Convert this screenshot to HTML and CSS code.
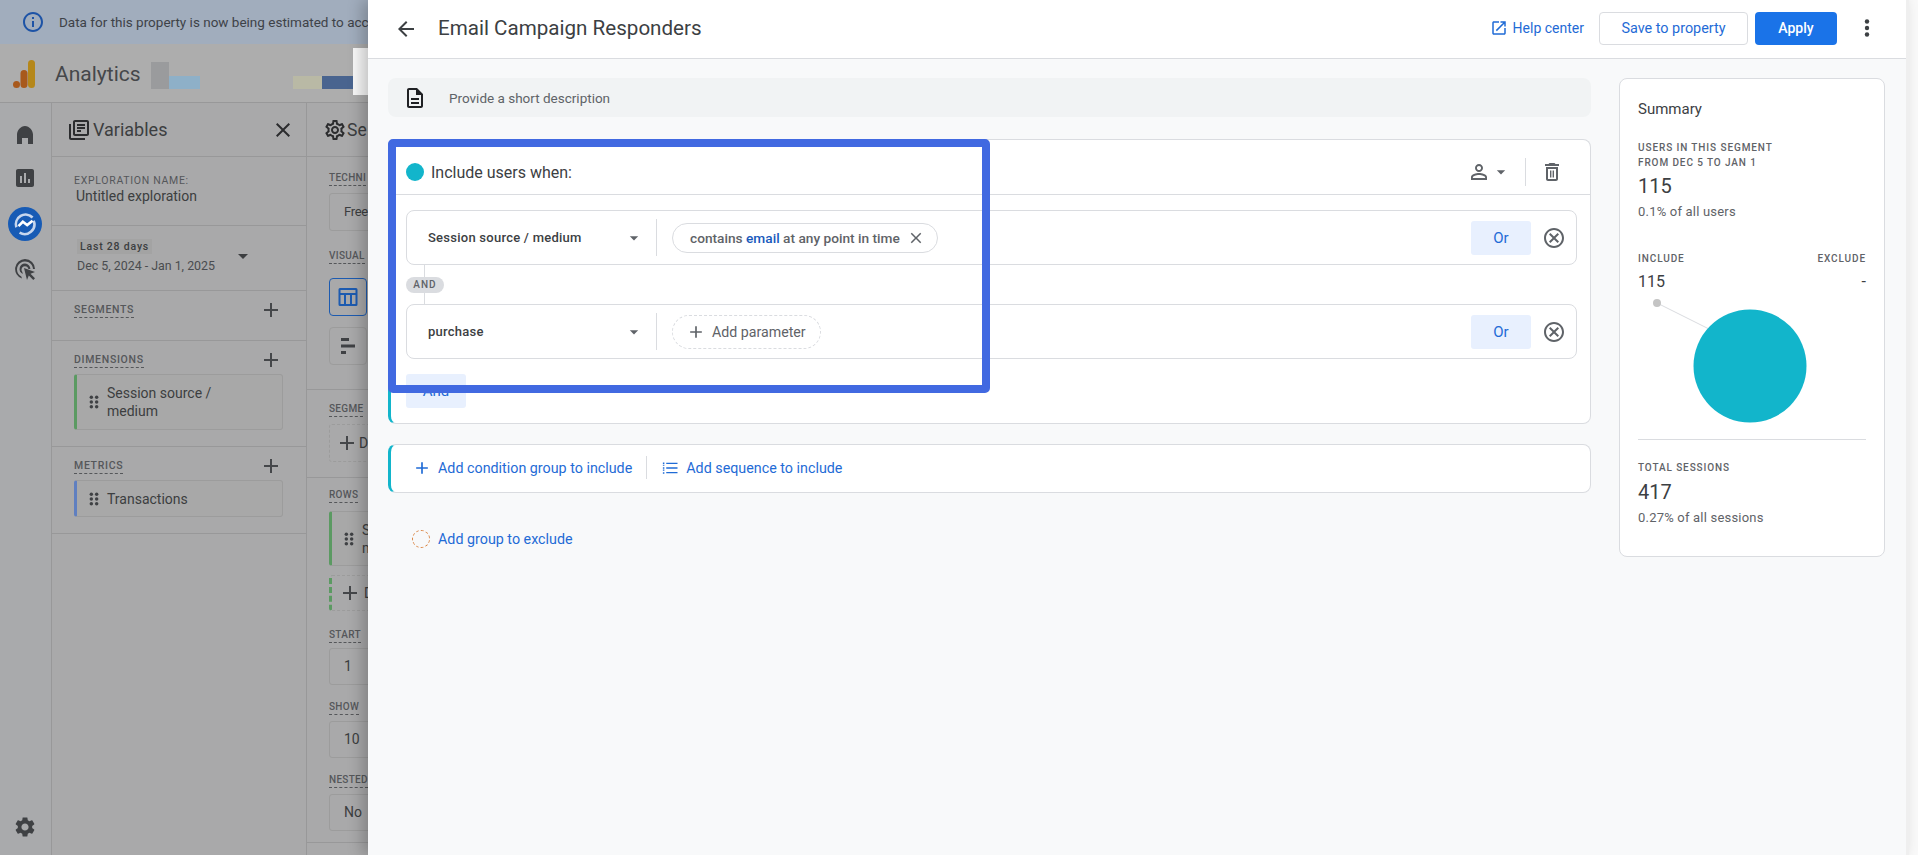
FILE: index.html
```html
<!DOCTYPE html>
<html lang="en">
<head>
<meta charset="utf-8">
<title>Email Campaign Responders</title>
<link rel="stylesheet" href="styles.css">
</head>
<body>
<svg class="sprite" aria-hidden="true">
  <symbol id="i-info" viewBox="0 0 24 24"><path d="M11 7h2v2h-2zm0 4h2v6h-2zm1-9C6.48 2 2 6.48 2 12s4.48 10 10 10 10-4.48 10-10S17.52 2 12 2zm0 18c-4.41 0-8-3.59-8-8s3.59-8 8-8 8 3.59 8 8-3.59 8-8 8z"/></symbol>
  <symbol id="i-home" viewBox="0 0 24 24"><path d="M4 21v-9.5C4 7.5 7.6 3 12 3s8 4.5 8 8.5V21h-5v-6H9v6z"/></symbol>
  <symbol id="i-bars" viewBox="0 0 24 24"><path d="M19 3H5c-1.1 0-2 .9-2 2v14c0 1.1.9 2 2 2h14c1.1 0 2-.9 2-2V5c0-1.1-.9-2-2-2zM9 17H7v-7h2v7zm4 0h-2V7h2v10zm4 0h-2v-4h2v4z"/></symbol>
  <symbol id="i-ads" viewBox="0 0 24 24"><path d="M12 2a10 10 0 0 0-3 19.5l-.7-2A8 8 0 1 1 20 12h2A10 10 0 0 0 12 2z"/><path d="M12 6.5a5.5 5.5 0 0 0-2.2 10.5l-.5-2a3.5 3.5 0 1 1 6.1-3h2A5.5 5.5 0 0 0 12 6.5z"/><path d="M11 11l11 4-4.5 1.8L22 21.3 20.3 23l-4.5-4.5L14 23z"/></symbol>
  <symbol id="i-library" viewBox="0 0 24 24"><path d="M4 6H2v14c0 1.1.9 2 2 2h14v-2H4V6zm16-4H8c-1.1 0-2 .9-2 2v12c0 1.1.9 2 2 2h12c1.1 0 2-.9 2-2V4c0-1.1-.9-2-2-2zm0 14H8V4h12v12zM10 9h8v2h-8zm0 3h4v2h-4zm0-6h8v2h-8z"/></symbol>
  <symbol id="i-gear" viewBox="0 0 24 24"><path d="M19.43 12.98c.04-.32.07-.64.07-.98 0-.34-.03-.66-.07-.98l2.11-1.65c.19-.15.24-.42.12-.64l-2-3.46c-.09-.16-.26-.25-.44-.25-.06 0-.12.01-.17.03l-2.49 1c-.52-.4-1.08-.73-1.69-.98l-.38-2.65C14.46 2.18 14.25 2 14 2h-4c-.25 0-.46.18-.49.42l-.38 2.65c-.61.25-1.17.59-1.69.98l-2.49-1c-.06-.02-.12-.03-.18-.03-.17 0-.34.09-.43.25l-2 3.46c-.13.22-.07.49.12.64l2.11 1.65c-.04.32-.07.65-.07.98 0 .33.03.66.07.98l-2.11 1.65c-.19.15-.24.42-.12.64l2 3.46c.09.16.26.25.44.25.06 0 .12-.01.17-.03l2.49-1c.52.4 1.08.73 1.69.98l.38 2.65c.03.24.24.42.49.42h4c.25 0 .46-.18.49-.42l.38-2.65c.61-.25 1.17-.59 1.69-.98l2.49 1c.06.02.12.03.18.03.17 0 .34-.09.43-.25l2-3.46c.12-.22.07-.49-.12-.64l-2.11-1.65zm-1.98-1.71c.04.31.05.52.05.73 0 .21-.02.43-.05.73l-.14 1.13.89.7 1.08.84-.7 1.21-1.27-.51-1.04-.42-.9.68c-.43.32-.84.56-1.25.73l-1.06.43-.16 1.13-.2 1.35h-1.4l-.19-1.35-.16-1.13-1.06-.43c-.43-.18-.83-.41-1.23-.71l-.91-.7-1.06.43-1.27.51-.7-1.21 1.08-.84.89-.7-.14-1.13c-.03-.31-.05-.54-.05-.74s.02-.43.05-.73l.14-1.13-.89-.7-1.08-.84.7-1.21 1.27.51 1.04.42.9-.68c.43-.32.84-.56 1.25-.73l1.06-.43.16-1.13.2-1.35h1.39l.19 1.35.16 1.13 1.06.43c.43.18.83.41 1.23.71l.91.7 1.06-.43 1.27-.51.7 1.21-1.07.85-.89.7.14 1.13zM12 8c-2.21 0-4 1.79-4 4s1.79 4 4 4 4-1.79 4-4-1.79-4-4-4zm0 6c-1.1 0-2-.9-2-2s.9-2 2-2 2 .9 2 2-.9 2-2 2z"/></symbol>
  <symbol id="i-cog" viewBox="0 0 24 24"><path d="M19.14 12.94c.04-.3.06-.61.06-.94 0-.32-.02-.64-.07-.94l2.03-1.58c.18-.14.23-.41.12-.61l-1.92-3.32c-.12-.22-.37-.29-.59-.22l-2.39.96c-.5-.38-1.03-.7-1.62-.94l-.36-2.54c-.04-.24-.24-.41-.48-.41h-3.84c-.24 0-.43.17-.47.41l-.36 2.54c-.59.24-1.13.57-1.62.94l-2.39-.96c-.22-.08-.47 0-.59.22L2.74 8.87c-.12.21-.08.47.12.61l2.03 1.58c-.05.3-.09.63-.09.94s.02.64.07.94l-2.03 1.58c-.18.14-.23.41-.12.61l1.92 3.32c.12.22.37.29.59.22l2.39-.96c.5.38 1.03.7 1.62.94l.36 2.54c.05.24.24.41.48.41h3.84c.24 0 .44-.17.47-.41l.36-2.54c.59-.24 1.13-.56 1.62-.94l2.39.96c.22.08.47 0 .59-.22l1.92-3.32c.12-.22.07-.47-.12-.61l-2.01-1.58zM12 15.6c-1.98 0-3.6-1.62-3.6-3.6s1.62-3.6 3.6-3.6 3.6 1.62 3.6 3.6-1.62 3.6-3.6 3.6z"/></symbol>
  <symbol id="i-close" viewBox="0 0 24 24"><path d="M19 6.41L17.59 5 12 10.59 6.41 5 5 6.41 10.59 12 5 17.59 6.41 19 12 13.41 17.59 19 19 17.59 13.41 12z"/></symbol>
  <symbol id="i-add" viewBox="0 0 24 24"><path d="M19 13h-6v6h-2v-6H5v-2h6V5h2v6h6v2z"/></symbol>
  <symbol id="i-caret" viewBox="0 0 24 24"><path d="M7 10l5 5 5-5z"/></symbol>
  <symbol id="i-drag" viewBox="0 0 24 24"><circle cx="8" cy="5" r="2.6"/><circle cx="16" cy="5" r="2.6"/><circle cx="8" cy="12" r="2.6"/><circle cx="16" cy="12" r="2.6"/><circle cx="8" cy="19" r="2.6"/><circle cx="16" cy="19" r="2.6"/></symbol>
  <symbol id="i-table" viewBox="0 0 24 24"><path d="M4 3h16a1.5 1.5 0 0 1 1.5 1.5v15A1.5 1.5 0 0 1 20 21H4a1.5 1.5 0 0 1-1.5-1.5v-15A1.5 1.5 0 0 1 4 3zm.5 2v3h15V5zm0 5v9H8v-9zm5.5 0v9h4v-9zm6 0v9h3.5v-9z"/></symbol>
  <symbol id="i-hbars" viewBox="0 0 24 24"><path d="M5 4h8v3H5zm0 6.5h14v3H5zM5 17h5v3H5z"/></symbol>
  <symbol id="i-back" viewBox="0 0 24 24"><path d="M20 11H7.83l5.59-5.59L12 4l-8 8 8 8 1.41-1.41L7.83 13H20v-2z"/></symbol>
  <symbol id="i-doc" viewBox="0 0 24 24"><path d="M8 16h8v2H8zm0-4h8v2H8zm6-10H6c-1.1 0-2 .9-2 2v16c0 1.1.89 2 1.99 2H18c1.1 0 2-.9 2-2V8l-6-6zm4 18H6V4h7v5h5v11z"/></symbol>
  <symbol id="i-open" viewBox="0 0 24 24"><path d="M19 19H5V5h7V3H5c-1.11 0-2 .9-2 2v14c0 1.1.89 2 2 2h14c1.1 0 2-.9 2-2v-7h-2v7zM14 3v2h3.59l-9.83 9.83 1.41 1.41L19 6.41V10h2V3h-7z"/></symbol>
  <symbol id="i-more" viewBox="0 0 24 24"><circle cx="12" cy="5.5" r="2.2"/><circle cx="12" cy="12" r="2.2"/><circle cx="12" cy="18.5" r="2.2"/></symbol>
  <symbol id="i-person" viewBox="0 0 24 24"><path d="M12 5.9c1.16 0 2.1.94 2.1 2.1s-.94 2.1-2.1 2.1S9.9 9.16 9.9 8s.94-2.1 2.1-2.1m0 9c2.97 0 6.1 1.46 6.1 2.1v1.1H5.9V17c0-.64 3.13-2.1 6.1-2.1M12 4C9.79 4 8 5.79 8 8s1.79 4 4 4 4-1.79 4-4-1.79-4-4-4zm0 9c-2.67 0-8 1.34-8 4v3h16v-3c0-2.66-5.33-4-8-4z"/></symbol>
  <symbol id="i-trash" viewBox="0 0 24 24"><path d="M6 19c0 1.1.9 2 2 2h8c1.1 0 2-.9 2-2V7H6v12zM8 9h8v10H8V9zm7.5-5l-1-1h-5l-1 1H5v2h14V4z"/><path d="M10 10.5h1.4v7H10zm2.6 0H14v7h-1.4z"/></symbol>
  <symbol id="i-cancel" viewBox="0 0 24 24"><path d="M12 2C6.47 2 2 6.47 2 12s4.47 10 10 10 10-4.47 10-10S17.53 2 12 2zm0 18c-4.41 0-8-3.59-8-8s3.59-8 8-8 8 3.59 8 8-3.59 8-8 8zm3.59-13L12 10.59 8.41 7 7 8.41 10.59 12 7 15.59 8.41 17 12 13.41 15.59 17 17 15.59 13.41 12 17 8.41z"/></symbol>
  <symbol id="i-list" viewBox="0 0 24 24"><path d="M7 5h15v1.8H7zm0 6.1h15v1.8H7zm0 6.1h15V19H7zM2.5 4.5h2v2h-2zm0 3h2V9h-2zm0 3.5h2v2h-2zm0 3h2v1.5h-2zm0 3.5h2v2h-2z"/></symbol>
</svg>

<div class="app">
  <div class="banner">
    <svg class="icon banner-icon"><use href="#i-info"/></svg>
    <span class="banner-text">Data for this property is now being estimated to acc</span>
  </div>
  <header class="topbar">
    <svg class="logo" viewBox="0 0 24 28" aria-hidden="true">
      <rect x="15" y="0" width="7" height="28" rx="3.5" fill="#b5871a"/>
      <rect x="7.5" y="10" width="7" height="18" rx="3.5" fill="#a8591c"/>
      <circle cx="3.5" cy="24.5" r="3.5" fill="#a8591c"/>
    </svg>
    <span class="product">Analytics</span>
    <div class="redacted">
      <span class="red-tall"></span>
      <span class="red-sky"></span>
      <span class="red-gap"></span>
      <span class="red-sand"></span>
      <span class="red-navy"></span>
      <span class="red-white"></span>
    </div>
  </header>
  <div class="workspace">
    <nav class="rail">
      <svg class="icon rail-icon rail-home"><use href="#i-home"/></svg>
      <svg class="icon rail-icon rail-bars"><use href="#i-bars"/></svg>
      <span class="rail-active">
        <svg class="explore" viewBox="0 0 24 24" aria-hidden="true"><path d="M4 15a9 9 0 0 1 15-9" fill="none" stroke="#c6d6ee" stroke-width="2.4"/><path d="M20 9a9 9 0 0 1-13 11" fill="none" stroke="#c6d6ee" stroke-width="2.4"/><path d="M6 14l4-4 4 3 5-4" fill="none" stroke="#fff" stroke-width="2.4"/></svg>
      </span>
      <svg class="icon rail-icon rail-ads"><use href="#i-ads"/></svg>
      <svg class="icon rail-icon rail-cog"><use href="#i-cog"/></svg>
    </nav>
    <aside class="vars">
      <div class="panel-head">
        <svg class="icon head-icon"><use href="#i-library"/></svg>
        <span class="panel-title">Variables</span>
        <svg class="icon head-close"><use href="#i-close"/></svg>
      </div>
      <section class="name-sec">
        <div class="cap-plain">EXPLORATION NAME:</div>
        <div class="name-val">Untitled exploration</div>
      </section>
      <section class="date-sec">
        <div>
          <span class="date-chip">Last 28 days</span>
          <div class="date-val">Dec 5, 2024 - Jan 1, 2025</div>
        </div>
        <svg class="icon date-caret"><use href="#i-caret"/></svg>
      </section>
      <section class="var-sec var-seg">
        <div class="var-head"><span class="cap">SEGMENTS</span><svg class="icon plus"><use href="#i-add"/></svg></div>
      </section>
      <section class="var-sec">
        <div class="var-head"><span class="cap">DIMENSIONS</span><svg class="icon plus"><use href="#i-add"/></svg></div>
        <div class="chip-card green tall">
          <svg class="icon drag"><use href="#i-drag"/></svg>
          <span>Session source /<br>medium</span>
        </div>
      </section>
      <section class="var-sec">
        <div class="var-head"><span class="cap">METRICS</span><svg class="icon plus"><use href="#i-add"/></svg></div>
        <div class="chip-card blue short">
          <svg class="icon drag"><use href="#i-drag"/></svg>
          <span>Transactions</span>
        </div>
      </section>
    </aside>
    <aside class="settings">
      <div class="panel-head settings-head">
        <svg class="icon head-icon gear"><use href="#i-gear"/></svg>
        <span class="panel-title">Se</span>
      </div>
      <section class="set-sec s-tech">
        <span class="cap">TECHNI</span>
        <div class="field field-tight">Free</div>
        <span class="cap cap-gap">VISUAL</span>
        <div class="viz viz-on"><svg class="icon"><use href="#i-table"/></svg></div>
        <div class="viz"><svg class="icon viz-dark"><use href="#i-hbars"/></svg></div>
      </section>
      <section class="set-sec s-seg">
        <span class="cap">SEGME</span>
        <div class="drop"><svg class="icon plus"><use href="#i-add"/></svg><span>D</span></div>
      </section>
      <section class="set-sec s-rows">
        <span class="cap">ROWS</span>
        <div class="chip-card green row-card">
          <svg class="icon drag"><use href="#i-drag"/></svg>
          <span>S<br>m</span>
        </div>
        <div class="drop green-dash"><svg class="icon plus"><use href="#i-add"/></svg><span>D</span></div>
        <span class="cap cap-start">START</span>
        <div class="field">1</div>
        <span class="cap cap-next">SHOW</span>
        <div class="field">10</div>
        <span class="cap cap-next">NESTED</span>
        <div class="field">No</div>
      </section>
    </aside>
  </div>
</div>

<div class="drawer">
  <header class="d-head">
    <svg class="icon d-back"><use href="#i-back"/></svg>
    <h1 class="d-title">Email Campaign Responders</h1>
    <a class="help"><svg class="icon help-icon"><use href="#i-open"/></svg>Help center</a>
    <button class="btn-save">Save to property</button>
    <button class="btn-apply">Apply</button>
    <svg class="icon d-more"><use href="#i-more"/></svg>
  </header>
  <div class="d-body">
    <main class="d-main">
      <div class="desc">
        <svg class="icon desc-icon"><use href="#i-doc"/></svg>
        <span>Provide a short description</span>
      </div>
      <section class="group">
        <div class="group-head">
          <span class="dot"></span>
          <span class="group-title">Include users when:</span>
          <span class="scope"><svg class="icon scope-person"><use href="#i-person"/></svg><svg class="icon scope-caret"><use href="#i-caret"/></svg></span>
          <svg class="icon group-trash"><use href="#i-trash"/></svg>
        </div>
        <div class="group-body">
          <div class="cond">
            <div class="cond-name">Session source / medium<svg class="icon cond-caret"><use href="#i-caret"/></svg></div>
            <div class="pill">contains&nbsp;<b>email</b>&nbsp;at any point in time<svg class="icon pill-x"><use href="#i-close"/></svg></div>
            <button class="btn-soft btn-or">Or</button>
            <svg class="icon cond-x"><use href="#i-cancel"/></svg>
          </div>
          <div class="and-link"><span class="and-tag">AND</span></div>
          <div class="cond">
            <div class="cond-name">purchase<svg class="icon cond-caret"><use href="#i-caret"/></svg></div>
            <div class="pill pill-add"><svg class="icon pill-plus"><use href="#i-add"/></svg>Add parameter</div>
            <button class="btn-soft btn-or">Or</button>
            <svg class="icon cond-x"><use href="#i-cancel"/></svg>
          </div>
          <button class="btn-soft btn-and">And</button>
        </div>
      </section>
      <section class="adders">
        <svg class="icon add-icon"><use href="#i-add"/></svg>
        <span class="add-text">Add condition group to include</span>
        <span class="add-sep"></span>
        <svg class="icon seq-icon"><use href="#i-list"/></svg>
        <span class="add-text">Add sequence to include</span>
      </section>
      <div class="exclude">
        <span class="ex-dot"></span>
        <span class="add-text">Add group to exclude</span>
      </div>
      <div class="highlight"></div>
    </main>
    <aside class="summary">
      <h2 class="sum-title">Summary</h2>
      <div class="sum-cap sum-cap-first">USERS IN THIS SEGMENT<br>FROM DEC 5 TO JAN 1</div>
      <div class="sum-big sum-big-first">115</div>
      <div class="sum-note">0.1% of all users</div>
      <div class="sum-split">
        <div><div class="sum-cap">INCLUDE</div><div class="sum-mid">115</div></div>
        <div class="sum-right"><div class="sum-cap">EXCLUDE</div><div class="sum-mid">-</div></div>
      </div>
      <svg class="pie" viewBox="0 0 228 130" aria-hidden="true">
        <line x1="19" y1="5" x2="75" y2="33" stroke="#dadce0" stroke-width="1"/>
        <circle cx="19" cy="5" r="4" fill="#c4c4c4"/>
        <circle cx="112" cy="68" r="56.5" fill="#12b5cb"/>
      </svg>
      <div class="sum-rule"></div>
      <div class="sum-cap">TOTAL SESSIONS</div>
      <div class="sum-big">417</div>
      <div class="sum-note">0.27% of all sessions</div>
    </aside>
  </div>
</div>
</body>
</html>
```
FILE: styles.css
```css
* { box-sizing: border-box; }
html, body { margin: 0; height: 100%; }
body {
  position: relative;
  overflow: hidden;
  background: #f9f9f9;
  font-family: Roboto, "Liberation Sans", sans-serif;
  color: #3c3e40;
}
.sprite { display: none; }
.icon { width: 24px; height: 24px; fill: currentColor; flex: none; display: block; }

.app { display: flex; flex-direction: column; width: 368px; height: 855px; background: #a9a9aa; overflow: hidden; }

.banner {
  height: 44px; flex: none; display: flex; align-items: center;
  background: #a1adbd; padding-left: 21px; white-space: nowrap;
}
.banner-icon { color: #1d53a6; margin-right: 14px; }
.banner-text { font-size: 13.5px; color: #3e4248; }

.topbar {
  height: 59px; flex: none; display: flex; align-items: center;
  background: #adadad; border-bottom: 1px solid #989899; padding-left: 13px;
}
.logo { width: 24px; height: 28px; margin-top: 1px; }
.product { font-size: 21px; margin: 1px 0 0 18px; color: #45474a; }
.redacted { display: flex; align-items: flex-end; position: absolute; left: 151px; top: 48px; height: 47px; }
.redacted span { display: block; }
.red-tall { width: 18px; height: 27px; margin-bottom: 6px; background: #9a9b9d; }
.red-sky { width: 31px; height: 13px; margin-bottom: 6px; background: #8eb0c8; }
.red-gap { width: 93px; }
.red-sand { width: 29px; height: 13px; margin-bottom: 6px; background: #b9b9a5; }
.red-navy { width: 31px; height: 13px; margin-bottom: 6px; background: #49648f; }
.red-white { width: 15px; height: 47px; background: #f8f8f8; }

.workspace { flex: 1; display: flex; min-height: 0; }
.rail {
  width: 52px; flex: none; position: relative;
  border-right: 1px solid #989899; color: #3f4144;
  display: flex; flex-direction: column; align-items: center; background: #a9aaac;
}
.rail-icon { width: 24px; height: 24px; margin-right: 1px; }
.rail-home { margin-top: 20px; }
.rail-bars { margin-top: 19px; }
.rail-active {
  width: 34px; height: 34px; border-radius: 50%; background: #175bb5; margin-top: 17px; margin-right: 1px;
  display: flex; align-items: center; justify-content: center; flex: none;
}
.explore { width: 26px; height: 26px; }
.rail-ads { margin-top: 16px; }
.rail-cog { margin-top: auto; margin-bottom: 16px; }

.vars { width: 255px; flex: none; border-right: 1px solid #989899; }
.settings { flex: 1; min-width: 0; }
.panel-head {
  height: 54px; border-bottom: 1px solid #989899;
  display: flex; align-items: center; padding: 0 11px 0 15px;
}
.settings-head { padding-right: 0; }
.head-icon { color: #2b2c2e; margin-right: 2px; }
.gear { margin-left: 1px; margin-right: 0; }
.panel-title { font-size: 18px; color: #3c3e40; white-space: nowrap; }
.settings-head .panel-title { font-size: 17.5px; }
.head-close { margin-left: auto; color: #2b2c2e; }

.cap, .cap-plain {
  font-size: 10.5px; line-height: 14px; letter-spacing: .7px; font-weight: 500; color: #55575a; white-space: nowrap;
}
.cap { display: inline-block; border-bottom: 1px dashed #55575a; height: 15px; }
.cap-plain { font-weight: 400; }
.set-sec .cap { font-size: 10px; letter-spacing: .3px; }

.name-sec { height: 69px; padding: 17px 0 0 22px; border-bottom: 1px solid #989899; }
.name-val { font-size: 14px; line-height: 18px; margin: -1px 0 0 2px; }
.date-sec {
  height: 65px; padding: 13px 0 0 25px; border-bottom: 1px solid #989899;
  display: flex; align-items: flex-start;
}
.date-chip {
  display: inline-block; height: 15px; line-height: 15px; padding: 0 3px; background: #a3a3a3;
  font-size: 10.5px; letter-spacing: .8px; font-weight: 500; color: #3c3e40; vertical-align: top;
}
.date-val { font-size: 12.4px; line-height: 16px; color: #4a4c4f; }
.date-caret { margin: 5px 0 0 16px; }

.var-sec { padding: 9px 23px 16px 22px; border-bottom: 1px solid #989899; }
.var-seg { height: 50px; }
.var-head { height: 20px; display: flex; align-items: center; justify-content: space-between; }
.plus { color: #45474a; }
.chip-card {
  margin-top: 4px; width: 209px; display: flex; align-items: center;
  border: 1px solid #9c9c9c; border-left: 3px solid #5b9a62; border-radius: 3px;
  font-size: 14px; line-height: 18px; color: #3c3e40; background: #a8a8a8;
}
.tall { height: 56px; }
.short { height: 37px; }
.blue { border-left-color: #5f7fc0; }
.drag { width: 16px; height: 16px; margin: 0 5px 0 9px; color: #3f4144; }

.s-tech { padding: 14px 0 24px 22px; border-bottom: 1px solid #989899; }
.set-sec > .cap { display: table; }
.field {
  width: 200px; height: 38px; margin-top: 7px; border: 1px solid #9c9c9c; border-radius: 3px;
  font-size: 14px; line-height: 36px; padding-left: 14px; color: #3c3e40;
}
.field-tight { font-size: 13px; letter-spacing: -.3px; }
.cap-gap { margin-top: 18px; }
.viz {
  width: 38px; height: 38px; margin-top: 11px; border: 1px solid #9c9c9c; border-radius: 4px;
  display: flex; align-items: center; justify-content: center;
}
.viz-on { margin-top: 14px; border-color: #1d5bb0; color: #1d5bb0; }
.viz-dark { color: #3f4144; }
.s-seg { padding: 12px 0 15px 22px; border-bottom: 1px solid #989899; }
.drop {
  width: 200px; height: 38px; margin-top: 7px; border: 1px dashed #9c9c9c; border-radius: 3px;
  display: flex; align-items: center; padding-left: 5px; font-size: 14px; white-space: nowrap;
}
.s-rows { padding: 10px 0 11px 22px; border-bottom: 1px solid #989899; }
.row-card { width: 200px; height: 55px; margin-top: 8px; }
.row-card .drag { margin: 0 5px 0 9px; }
.green-dash { height: 36px; margin-top: 9px; border-left: 3px dashed #5b9a62; padding-left: 6px; }
.green-dash .plus { margin-right: 2px; }
.cap-start { margin-top: 17px; }
.cap-next { margin-top: 15px; }
.s-rows .field { height: 37px; margin-top: 6px; line-height: 35px; }
.s-rows .cap-start + .field { margin-top: 5px; }

.drawer {
  position: absolute; left: 368px; top: 0; bottom: 0; width: 1541px;
  background: #f8f9fa; border-right: 3px solid #efefef; box-shadow: -6px 0 14px rgba(0,0,0,.22);
  display: flex; flex-direction: column; color: #3c4043;
}
.d-head {
  height: 59px; flex: none; background: #fff; border-bottom: 1px solid #dadce0;
  display: flex; align-items: center; padding: 0 27px 0 26px; margin-bottom: -1px;
}
.d-back { color: #3c4043; margin-top: -1px; }
.d-title { margin: -2px 0 0 20px; font-size: 20.6px; font-weight: 400; color: #3c4043; flex: 1; }
.help { display: flex; align-items: center; font-size: 14px; color: #1f6bd6; margin-top: -2px; }
.help-icon { width: 18px; height: 18px; margin: 0 5px 0 -2px; }
.btn-save, .btn-apply {
  height: 33px; border-radius: 4px; font: 500 14px Roboto, sans-serif; margin-top: -2px; cursor: pointer;
}
.btn-save { width: 149px; margin-left: 15px; background: #fff; border: 1px solid #dadce0; color: #1f6bd6; font-size: 14.4px; font-weight: 400; }
.btn-apply { width: 82px; margin-left: 7px; background: #1a73e8; border: 0; color: #fff; }
.d-more { margin: -2px 0 0 18px; color: #3c4043; }

.d-body { flex: 1; display: flex; padding: 20px 0 0 20px; align-items: flex-start; }
.d-main { width: 1203px; flex: none; position: relative; }
.desc {
  height: 39px; background: #f1f3f4; border-radius: 8px; display: flex; align-items: center;
  padding-left: 15px; font-size: 13.5px; color: #5f6368;
}
.desc-icon { color: #202124; margin-right: 22px; }
.group {
  margin-top: 22px; height: 285px; background: #fff; border: 1px solid #dadce0;
  border-left: 3px solid #12b5cb; border-radius: 8px;
}
.group-head {
  height: 55px; border-bottom: 1px solid #dadce0; display: flex; align-items: center; padding: 10px 0 0 15px;
}
.dot { width: 18px; height: 18px; border-radius: 50%; background: #12b5cb; }
.group-title { font-size: 16px; margin-left: 7px; color: #3c4043; }
.scope {
  margin-left: auto; display: flex; align-items: center; height: 28px; padding-right: 14px;
  border-right: 1px solid #dadce0; color: #5f6368;
}
.scope-caret { width: 20px; height: 20px; }
.group-trash { color: #5f6368; margin: 0 26px 0 14px; }
.group-body { padding: 15px 13px 0 15px; }
.cond {
  height: 55px; background: #fff; border: 1px solid #dadce0; border-radius: 8px;
  display: flex; align-items: center; padding: 0 10px 0 21px;
}
.cond-name {
  width: 229px; height: 37px; border-right: 1px solid #dadce0; font-size: 13px; font-weight: 500;
  letter-spacing: .25px; color: #3c4043; display: flex; align-items: center; justify-content: space-between;
  padding-right: 12px; margin-right: 15px; white-space: nowrap;
}
.cond-caret { width: 20px; height: 20px; color: #5f6368; }
.pill {
  height: 30px; width: 266px; border: 1px solid #dadce0; border-radius: 15px;
  display: flex; align-items: center; padding-left: 17px; font-size: 13.7px; font-weight: 500; color: #5f6368; white-space: nowrap;
}
.pill b { color: #185abc; font-weight: 500; }
.pill-x { width: 18px; height: 18px; margin-left: auto; margin-right: 12px; }
.pill-add { width: 149px; height: 34px; border-style: dashed; border-radius: 17px; font-weight: 400; padding-left: 13px; font-size: 14.2px; }
.pill-plus { width: 20px; height: 20px; margin-right: 6px; }
.btn-soft {
  background: #e8f0fe; border: 0; border-radius: 3px; color: #1f6bd6; font: 400 15px Roboto, sans-serif; cursor: pointer;
}
.btn-or { width: 60px; height: 34px; margin-left: auto; }
.cond-x { color: #5f6368; margin-left: 11px; }
.and-link {
  height: 39px; display: flex; align-items: center; padding-top: 1px;
  background: linear-gradient(#dadce0, #dadce0) 18px 0 / 1px 100% no-repeat;
}
.and-tag {
  width: 38px; height: 16px; border-radius: 8px; background: #dadce0; text-align: center;
  font-size: 10px; line-height: 16px; letter-spacing: 1px; font-weight: 500; color: #5f6368;
}
.btn-and { display: block; width: 60px; height: 34px; margin-top: 15px; }
.adders {
  margin-top: 20px; height: 49px; background: #fff; border: 1px solid #dadce0;
  border-left: 3px solid #12b5cb; border-radius: 8px;
  display: flex; align-items: center; padding: 0 0 2px 21px; color: #1f6bd6;
}
.add-icon { width: 20px; height: 20px; margin-right: 6px; }
.add-text { font-size: 14.3px; color: #1f6bd6; white-space: nowrap; }
.add-sep { width: 1px; height: 23px; background: #dadce0; margin: 0 14px; }
.seq-icon { width: 18px; height: 18px; margin-right: 7px; }
.exclude { margin-top: 36px; height: 20px; display: flex; align-items: center; padding-left: 24px; }
.ex-dot { width: 18px; height: 18px; border-radius: 50%; border: 1px dashed #d9823f; margin-right: 8px; }
.highlight {
  position: absolute; left: 0; top: 61px; width: 602px; height: 254px;
  border: 8px solid #4169e1; border-radius: 5px; pointer-events: none;
}

.summary {
  width: 266px; height: 479px; flex: none; margin-left: 28px; background: #fff;
  border: 1px solid #dadce0; border-radius: 8px; padding: 20px 18px 0;
}
.sum-title { margin: 0; font-size: 15px; line-height: 20px; font-weight: 400; color: #3c4043; }
.sum-cap { font-size: 10px; line-height: 15px; letter-spacing: .9px; font-weight: 500; color: #5f6368; white-space: nowrap; }
.sum-cap-first { margin-top: 21px; }
.sum-big { font-size: 20px; line-height: 26px; margin-top: 4px; color: #3c4043; }
.sum-big-first { margin-top: 3px; }
.sum-note { font-size: 13px; line-height: 18px; margin-top: 4px; color: #5f6368; letter-spacing: .2px; }
.sum-split { display: flex; justify-content: space-between; margin-top: 30px; width: 228px; }
.sum-right { text-align: right; }
.sum-mid { font-size: 16px; line-height: 22px; margin-top: 5px; color: #3c4043; }
.pie { display: block; width: 228px; height: 130px; margin-top: 5px; }
.sum-rule { width: 228px; height: 1px; background: #dadce0; margin: 11px 0 20px; }
```
